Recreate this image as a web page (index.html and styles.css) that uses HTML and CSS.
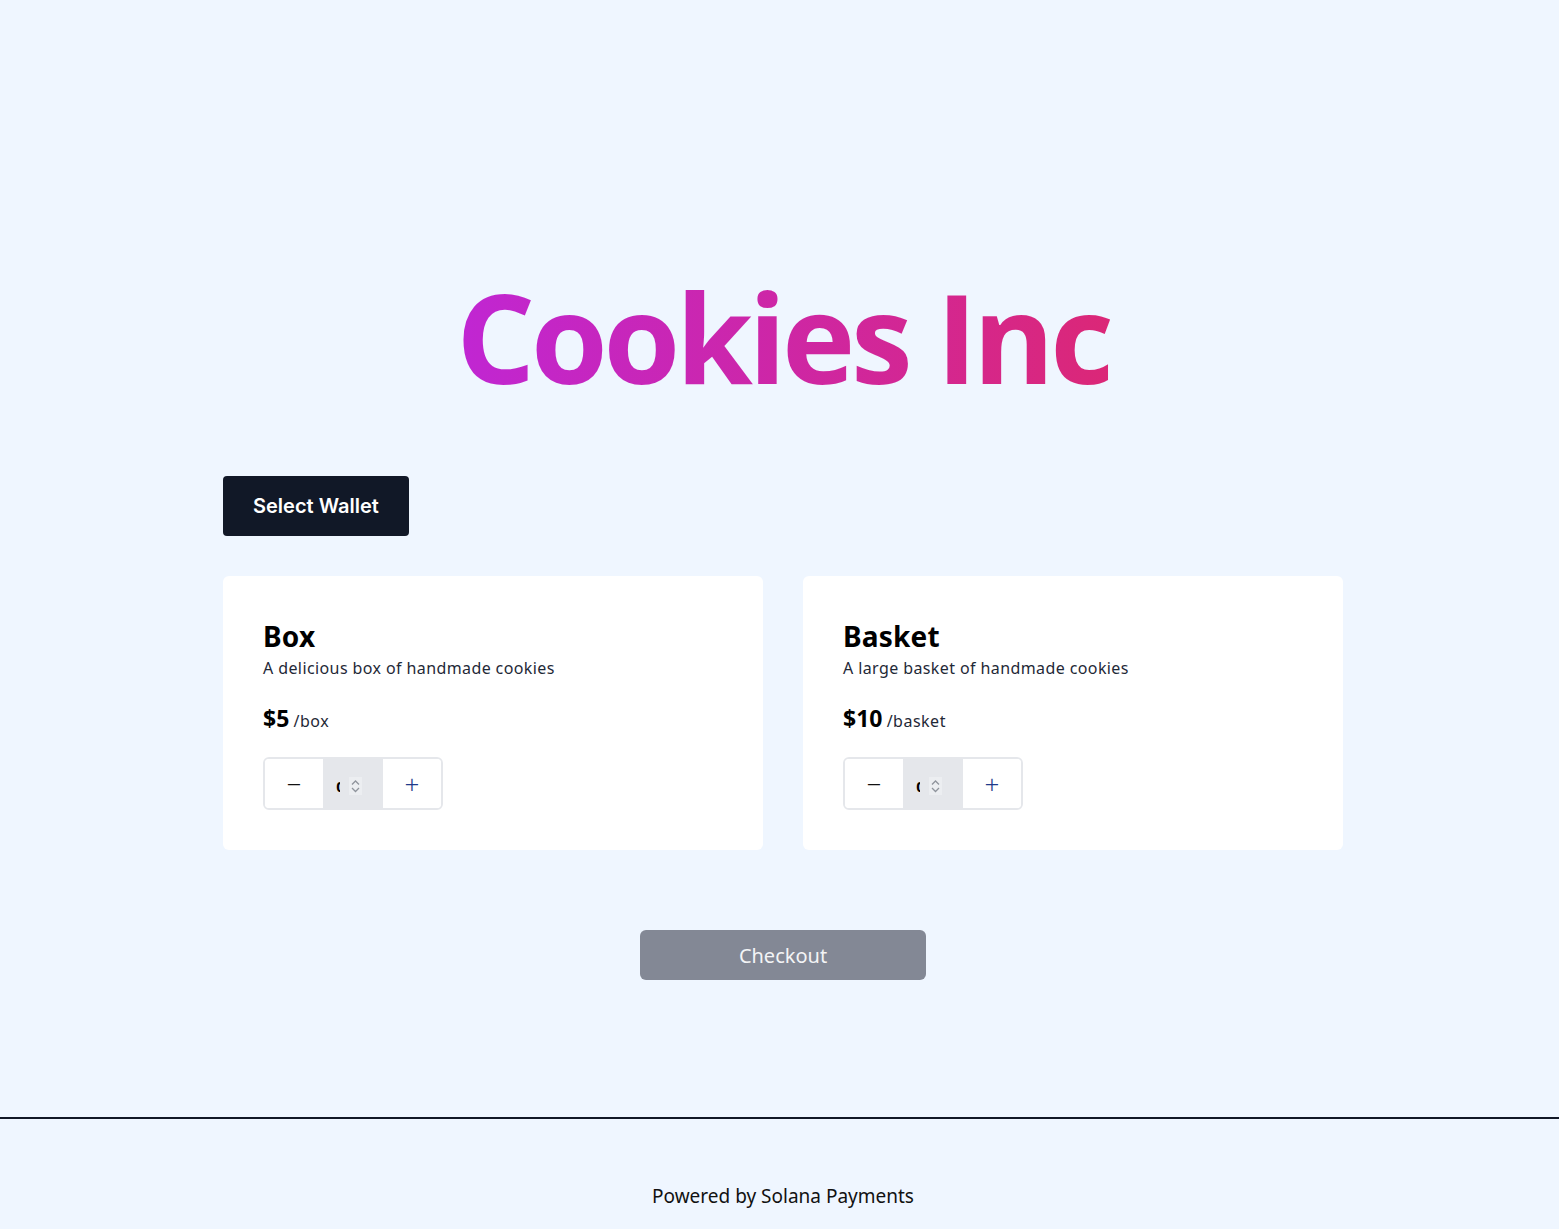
FILE: index.html
```html
<!DOCTYPE html>
<html lang="en">
<head>
<meta charset="utf-8">
<title>Cookies Inc</title>
<link rel="stylesheet" href="styles.css">
</head>
<body>
<div class="page">
  <main class="main">
    <h1 class="title">Cookies Inc</h1>
    <div class="wallet-row">
      <button class="wallet-btn">Select Wallet</button>
    </div>
    <div class="products">
      <div class="card">
        <h2 class="card-title">Box</h2>
        <p class="card-desc">A delicious box of handmade cookies</p>
        <p class="price"><span class="amount">$5</span> <span class="unit">/box</span></p>
        <div class="counter">
          <button class="step">&minus;</button>
          <div class="qty">
            <span class="qty-clip"><span class="qty-val">0</span></span>
            <span class="spin">
              <svg width="13" height="18" viewBox="0 0 13 18"><path d="M3 7.5 L6.5 4 L10 7.5" fill="none" stroke="#8f949c" stroke-width="1.3"/><path d="M3 11 L6.5 14.5 L10 11" fill="none" stroke="#8f949c" stroke-width="1.3"/></svg>
            </span>
          </div>
          <button class="step plus">+</button>
        </div>
      </div>
      <div class="card">
        <h2 class="card-title">Basket</h2>
        <p class="card-desc">A large basket of handmade cookies</p>
        <p class="price"><span class="amount">$10</span> <span class="unit">/basket</span></p>
        <div class="counter">
          <button class="step">&minus;</button>
          <div class="qty">
            <span class="qty-clip"><span class="qty-val">0</span></span>
            <span class="spin">
              <svg width="13" height="18" viewBox="0 0 13 18"><path d="M3 7.5 L6.5 4 L10 7.5" fill="none" stroke="#8f949c" stroke-width="1.3"/><path d="M3 11 L6.5 14.5 L10 11" fill="none" stroke="#8f949c" stroke-width="1.3"/></svg>
            </span>
          </div>
          <button class="step plus">+</button>
        </div>
      </div>
    </div>
    <div class="checkout-row">
      <button class="checkout">Checkout</button>
    </div>
  </main>
  <footer class="footer">
    <p class="powered">Powered by Solana Payments</p>
  </footer>
</div>
</body>
</html>
```

FILE: styles.css
```css
* { box-sizing: border-box; }
html, body { margin: 0; padding: 0; }
body {
  background: #eff6ff;
  font-family: "Noto Sans", "Open Sans", sans-serif;
  color: #000;
}
.page {
  min-height: 1229px;
  display: flex;
  flex-direction: column;
}
.main {
  width: 1120px;
  margin: 0 auto;
  position: relative;
  left: 3.5px;
  padding-top: 266px;
}
.title {
  margin: 0 auto;
  width: fit-content;
  white-space: nowrap;
  text-align: center;
  font-family: "Open Sans", sans-serif;
  font-weight: 700;
  font-size: 124px;
  line-height: 140px;
  letter-spacing: -4.3px;
  background-image: linear-gradient(90deg, #c026d3, #db2777);
  -webkit-background-clip: text;
  background-clip: text;
  color: transparent;
}
.wallet-row {
  margin-top: 70px;
}
.wallet-btn {
  height: 60px;
  padding: 0 30px;
  background: #111827;
  color: #fff;
  border: 0;
  border-radius: 4px;
  font-family: Inter, sans-serif;
  font-weight: 600;
  font-size: 20px;
}
.products {
  margin-top: 40px;
  display: grid;
  grid-template-columns: 1fr 1fr;
  gap: 40px;
}
.card {
  background: #fff;
  border-radius: 6px;
  padding: 40px;
  height: 274px;
}
.card-title {
  margin: 0;
  font-weight: 700;
  font-size: 28px;
  line-height: 40px;
  letter-spacing: 0.2px;
}
.card-desc {
  margin: 0;
  font-size: 16px;
  line-height: 24px;
  letter-spacing: 0.4px;
  color: #1f2937;
}
.price {
  margin: 22px 0 0;
  line-height: 32px;
}
.amount {
  font-weight: 700;
  font-size: 23px;
}
.unit {
  font-size: 16px;
  letter-spacing: 0.5px;
  color: #1f2937;
}
.counter {
  margin-top: 20px;
  width: 180px;
  height: 53px;
  border: 2px solid #e5e7eb;
  border-radius: 6px;
  display: flex;
  overflow: hidden;
}
.step {
  width: 59px;
  border: 0;
  background: #fff;
  font-family: "Noto Sans", sans-serif;
  font-size: 26px;
  font-weight: 300;
  color: #111;
  padding: 0;
  display: flex;
  align-items: center;
  justify-content: center;
}
.step.plus { color: #1e3a8a; }
.qty {
  width: 60px;
  background: #e5e7eb;
  display: flex;
  align-items: center;
  padding-left: 13px;
  padding-top: 5px;
}
.qty-clip {
  width: 4px;
  overflow: hidden;
  display: inline-block;
  font-size: 15px;
  font-weight: 700;
  line-height: 18px;
  color: #000;
  font-family: "Noto Sans", sans-serif;
}
.qty-val { display: inline-block; }
.spin {
  margin-left: 9px;
  width: 13px;
  height: 18px;
  background: #eceef1;
  display: flex;
}
.checkout-row {
  margin-top: 80px;
  display: flex;
  justify-content: center;
}
.checkout {
  width: 286px;
  height: 50px;
  border: 0;
  border-radius: 6px;
  background: #838895;
  color: #f3f4f6;
  font-family: "Noto Sans", sans-serif;
  font-size: 20px;
}
.footer {
  margin-top: auto;
  border-top: 2px solid #111827;
  height: 112px;
  display: flex;
  justify-content: center;
  align-items: flex-end;
}
.powered {
  margin: 0 0 21px;
  position: relative;
  left: 3.5px;
  font-size: 19px;
  line-height: 24px;
  color: #111;
}
```
